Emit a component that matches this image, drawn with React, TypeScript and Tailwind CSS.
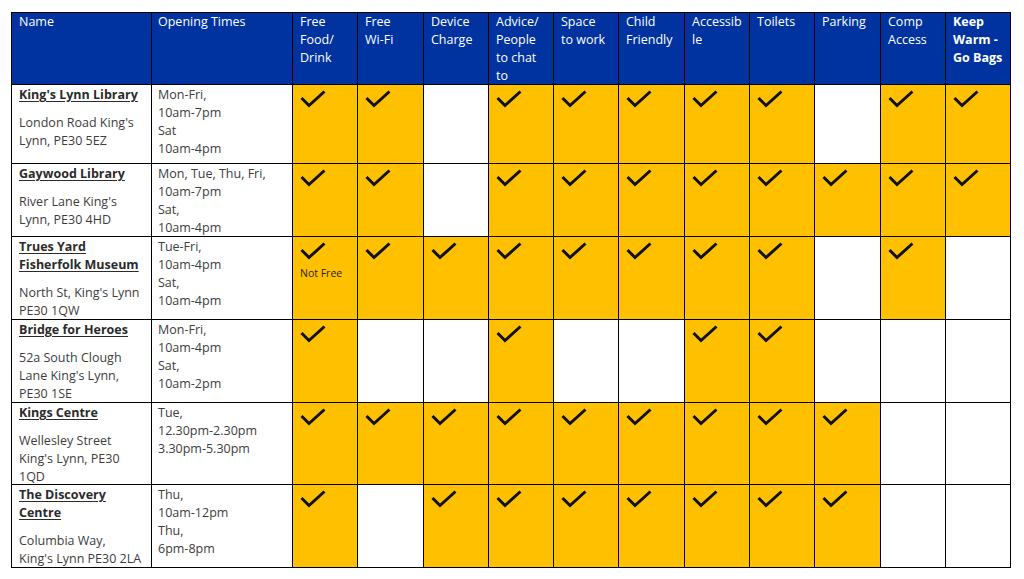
import React from "react";

type Row = {
  name: string[];
  address: string[];
  times: string[];
  flags: number[]; // 1 yes, 0 no, 2 yes with "Not Free"
};

const headers: { lines: string[]; bold?: boolean }[] = [
  { lines: ["Name"] },
  { lines: ["Opening Times"] },
  { lines: ["Free", "Food/", "Drink"] },
  { lines: ["Free", "Wi-Fi"] },
  { lines: ["Device", "Charge"] },
  { lines: ["Advice/", "People", "to chat", "to"] },
  { lines: ["Space", "to work"] },
  { lines: ["Child", "Friendly"] },
  { lines: ["Accessib", "le"] },
  { lines: ["Toilets"] },
  { lines: ["Parking"] },
  { lines: ["Comp", "Access"] },
  { lines: ["Keep", "Warm -", "Go Bags"], bold: true },
];

const rows: Row[] = [
  {
    name: ["King's Lynn Library"],
    address: ["London Road King's", "Lynn, PE30 5EZ"],
    times: ["Mon-Fri,", "10am-7pm", "Sat", "10am-4pm"],
    flags: [1, 1, 0, 1, 1, 1, 1, 1, 0, 1, 1],
  },
  {
    name: ["Gaywood Library"],
    address: ["River Lane King's", "Lynn, PE30 4HD"],
    times: ["Mon, Tue, Thu, Fri,", "10am-7pm", "Sat,", "10am-4pm"],
    flags: [1, 1, 0, 1, 1, 1, 1, 1, 1, 1, 1],
  },
  {
    name: ["Trues Yard", "Fisherfolk Museum"],
    address: ["North St, King's Lynn", "PE30 1QW"],
    times: ["Tue-Fri,", "10am-4pm", "Sat,", "10am-4pm"],
    flags: [2, 1, 1, 1, 1, 1, 1, 1, 0, 1, 0],
  },
  {
    name: ["Bridge for Heroes"],
    address: ["52a South Clough", "Lane King's Lynn,", "PE30 1SE"],
    times: ["Mon-Fri,", "10am-4pm", "Sat,", "10am-2pm"],
    flags: [1, 0, 0, 1, 0, 0, 1, 1, 0, 0, 0],
  },
  {
    name: ["Kings Centre"],
    address: ["Wellesley Street", "King's Lynn, PE30", "1QD"],
    times: ["Tue,", "12.30pm-2.30pm", "3.30pm-5.30pm"],
    flags: [1, 1, 1, 1, 1, 1, 1, 1, 1, 0, 0],
  },
  {
    name: ["The Discovery", "Centre"],
    address: ["Columbia Way,", "King's Lynn PE30 2LA"],
    times: ["Thu,", "10am-12pm", "Thu,", "6pm-8pm"],
    flags: [1, 0, 1, 1, 1, 1, 1, 1, 1, 0, 0],
  },
];

function Check() {
  return (
    <svg width="26" height="18" viewBox="0 0 26 18" className="block">
      <polyline
        points="1.5,8 9,15.5 24.5,1.5"
        fill="none"
        stroke="#111111"
        strokeWidth="3"
        strokeLinecap="butt"
        strokeLinejoin="miter"
      />
    </svg>
  );
}

export default function App() {
  return (
    <div
      className="w-[1024px] h-[579px] bg-white overflow-hidden pt-[12px] pl-[11px]"
      style={{ fontFamily: '"Open Sans", "Noto Sans", sans-serif' }}
    >
      <div className="grid w-fit bg-black gap-px p-px grid-cols-[139px_140px_64px_65px_64px_64px_64px_65px_64px_64px_65px_64px_64px] grid-rows-[71px_78px_72px_82px_82px_81px_82px] text-[12.5px] leading-[18px]">
        {headers.map((h, i) => (
          <div
            key={i}
            className={`bg-[#0033a0] text-white pt-0 whitespace-nowrap overflow-hidden ${
              h.bold ? "font-bold" : ""
            } ${i === 1 ? "pl-[6px]" : "pl-[7px]"}`}
          >
            {h.lines.map((l, j) => (
              <div key={j}>{l}</div>
            ))}
          </div>
        ))}
        {rows.map((r, ri) => (
          <React.Fragment key={ri}>
            <div className="bg-white pl-[7px] pt-[1px] text-[#3d3d3d] whitespace-nowrap overflow-hidden">
              {r.name.map((l, j) => (
                <div key={j} className="font-bold text-[#2b2b2b] underline underline-offset-2">
                  {l}
                </div>
              ))}
              <div className="mt-[10px]">
                {r.address.map((l, j) => (
                  <div key={j}>{l}</div>
                ))}
              </div>
            </div>
            <div className="bg-white pl-[6px] pt-[1px] text-[#3d3d3d] whitespace-nowrap overflow-hidden">
              {r.times.map((l, j) => (
                <div key={j}>{l}</div>
              ))}
            </div>
            {r.flags.map((f, fi) => (
              <div
                key={fi}
                className={`${f ? "bg-[#ffc000]" : "bg-white"} pl-[7px] pt-[5px] overflow-hidden`}
              >
                {f ? <Check /> : null}
                {f === 2 ? (
                  <div className="text-[10.5px] leading-[14px] text-[#222] mt-[6px] whitespace-nowrap">
                    Not Free
                  </div>
                ) : null}
              </div>
            ))}
          </React.Fragment>
        ))}
      </div>
    </div>
  );
}
